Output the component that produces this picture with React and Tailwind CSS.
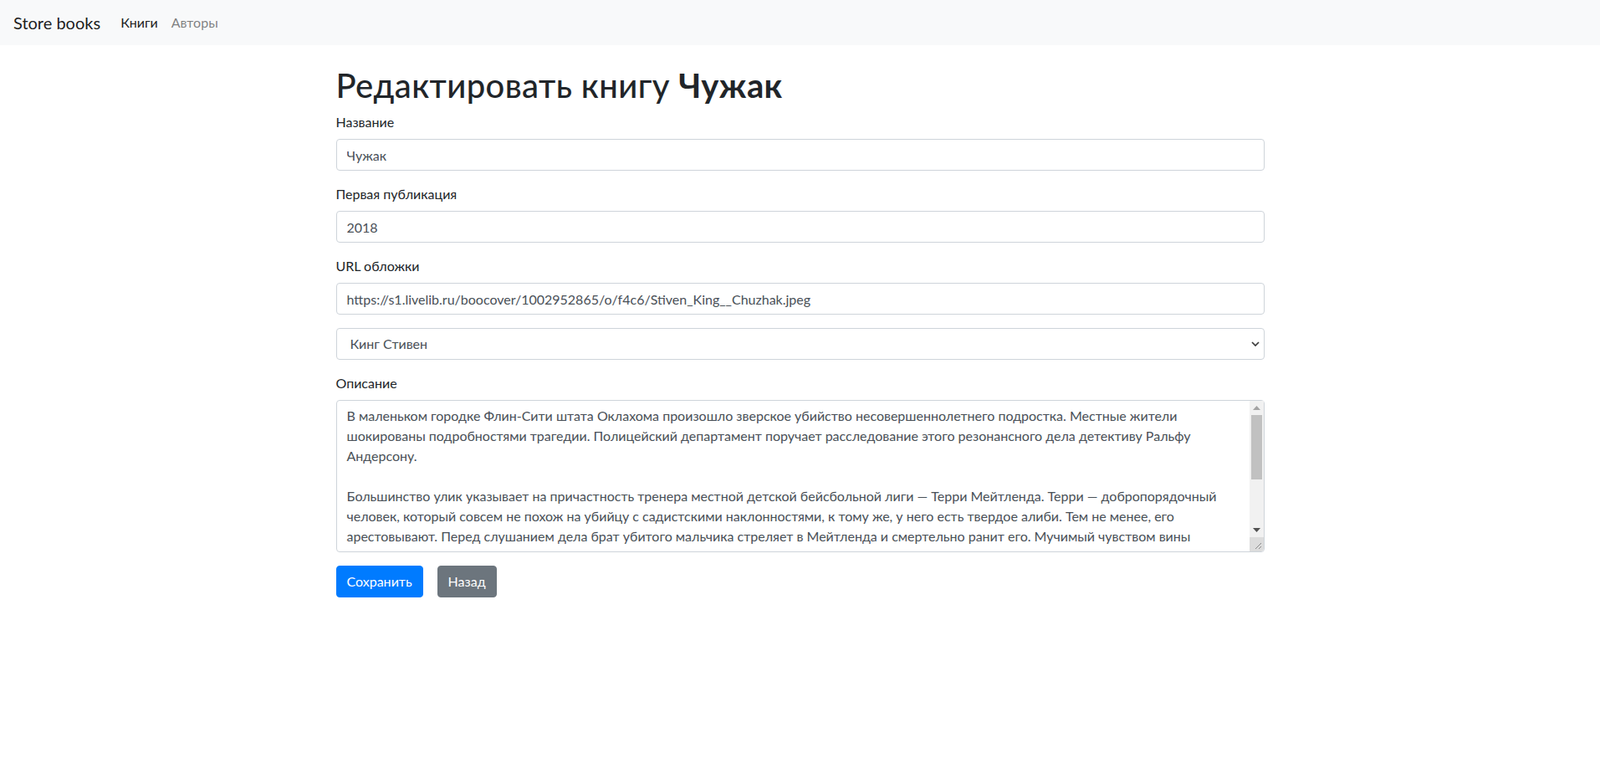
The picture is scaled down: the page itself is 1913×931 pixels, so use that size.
import React from 'react'

const description = [
  'В маленьком городке Флин-Сити штата Оклахома произошло зверское убийство несовершеннолетнего подростка. Местные жители',
  'шокированы подробностями трагедии. Полицейский департамент поручает расследование этого резонансного дела детективу Ральфу',
  'Андерсону.',
  '',
  'Большинство улик указывает на причастность тренера местной детской бейсбольной лиги — Терри Мейтленда. Терри — добропорядочный',
  'человек, который совсем не похож на убийцу с садистскими наклонностями, к тому же, у него есть твердое алиби. Тем не менее, его',
  'арестовывают. Перед слушанием дела брат убитого мальчика стреляет в Мейтленда и смертельно ранит его. Мучимый чувством вины',
  'Андерсон начинает собственное расследование и вскоре понимает, что в этом деле всё не так, как кажется на первый взгляд.',
  '',
  'Стивен Кинг — признанный мастер детективного жанра, и его новый роман доказывает это в очередной раз.',
].join('\n')

function Field({ label, value }) {
  return (
    <div className="mb-4">
      <label className="block mb-2 leading-6 text-[#212529]">{label}</label>
      <input
        type="text"
        defaultValue={value}
        className="block w-full h-[38px] px-3 py-[6px] border border-[#ced4da] rounded text-base leading-6 text-[#495057] bg-white outline-none"
      />
    </div>
  )
}

function TextareaScrollbar() {
  return (
    <div className="absolute top-px right-px bottom-px w-[17px] flex flex-col bg-[#f1f1f1] rounded-br">
      <div className="h-[17px] flex items-center justify-center">
        <svg width="9" height="5" viewBox="0 0 9 5"><path d="M0 5 L4.5 0 L9 5 Z" fill="#a3a3a3" /></svg>
      </div>
      <div className="h-[77px] mx-[2px] bg-[#c1c1c1]" />
      <div className="flex-1" />
      <div className="h-[17px] flex items-center justify-center">
        <svg width="9" height="5" viewBox="0 0 9 5"><path d="M0 0 L4.5 5 L9 0 Z" fill="#505050" /></svg>
      </div>
      <div className="h-[17px] bg-[#dcdcdc] flex items-end justify-end rounded-br">
        <svg width="10" height="10" viewBox="0 0 10 10" className="mr-[2px] mb-[2px]">
          <path d="M9 2 L2 9 M9 6 L6 9" stroke="#8a8a8a" strokeWidth="1" />
        </svg>
      </div>
    </div>
  )
}

export default function App() {
  return (
    <div className="min-h-screen bg-white text-base text-[#212529] font-['Lato','Open_Sans',sans-serif]">
      <nav className="flex items-center h-[54px] px-4 bg-[#f8f9fa]">
        <span className="text-[20px] leading-[30px] mr-4 text-black/90">Store books</span>
        <a className="px-2 text-black/90 leading-6">Книги</a>
        <a className="px-2 text-black/50 leading-6">Авторы</a>
      </nav>

      <div className="w-[1140px] mx-auto px-[15px] mt-6">
        <h1 className="text-[40px] leading-[48px] font-medium tracking-[0.01em] mb-2">
          Редактировать книгу <b className="font-bold">Чужак</b>
        </h1>

        <Field label="Название" value="Чужак" />
        <Field label="Первая публикация" value="2018" />
        <Field label="URL обложки" value="https://s1.livelib.ru/boocover/1002952865/o/f4c6/Stiven_King__Chuzhak.jpeg" />

        <div className="mb-4 relative">
          <select className="block w-full h-[38px] pl-4 pr-8 border border-[#ced4da] rounded text-base leading-6 text-[#495057] bg-white appearance-none outline-none">
            <option>Кинг Стивен</option>
          </select>
          <svg
            width="10"
            height="6"
            viewBox="0 0 10 6"
            className="absolute right-[6px] top-[16px] pointer-events-none"
          >
            <path d="M1 1 L5 5 L9 1" fill="none" stroke="#3a3a3a" strokeWidth="1.7" />
          </svg>
        </div>

        <div className="mb-4">
          <label className="block mb-2 leading-6">Описание</label>
          <div className="relative">
            <textarea
              readOnly
              rows={7}
              value={description}
              className="block w-full h-[182px] resize-none overflow-hidden whitespace-pre border border-[#ced4da] rounded py-[6px] pl-3 pr-[30px] text-base leading-6 text-[#495057] bg-white outline-none"
            />
            <TextareaScrollbar />
          </div>
        </div>

        <div className="flex gap-[17px]">
          <button className="h-[38px] px-3 rounded bg-[#007bff] border border-[#007bff] text-white leading-6">
            Сохранить
          </button>
          <button className="h-[38px] px-3 rounded bg-[#6c757d] border border-[#6c757d] text-white leading-6">
            Назад
          </button>
        </div>
      </div>
    </div>
  )
}
